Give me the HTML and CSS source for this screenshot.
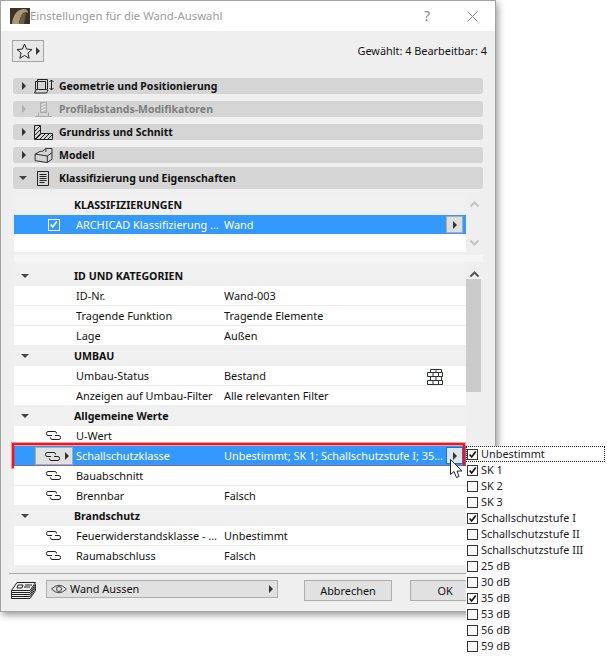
FILE: index.html
```html
<!DOCTYPE html>
<html lang="de">
<head>
<meta charset="utf-8">
<title>Einstellungen für die Wand-Auswahl</title>
<link rel="stylesheet" href="styles.css">
</head>
<body>
<svg class="defs" width="0" height="0" aria-hidden="true">
  <defs>
    <symbol id="link" viewBox="0 0 15 9">
      <path d="M6 4.500H2Q.5 4.500 .5 2.500T2 .5H9Q10.500 .5 10.500 2.500M9 4.500H13Q14.500 4.500 14.500 6.500T13 8.500H6Q4.500 8.500 4.500 6.500" fill="none" stroke="#222" stroke-width="1"/>
    </symbol>
    <symbol id="check" viewBox="0 0 11 11">
      <path d="M2 5.500L4.500 8.500L9.500 1.800" fill="none" stroke="currentColor" stroke-width="2"/>
    </symbol>
  </defs>
</svg>
<div class="dialog">
  <header class="titlebar">
    <svg class="app-icon" viewBox="0 0 20 16"><rect width="20" height="16" fill="#3b3226"/><path d="M2 16C3 6 8 1 14 1C17 1 18 3 18 5C14 2 10 7 9 16Z" fill="#a89878"/><path d="M9 16C10 8 13 5 16 5L14 16Z" fill="#6b5c46"/></svg>
    <span class="title">Einstellungen für die Wand-Auswahl</span>
    <span class="help">?</span>
    <svg class="close" viewBox="0 0 11 11"><path d="M.5 .5L10.500 10.500M10.500 .5L.5 10.500" stroke="#8a8a8a" fill="none"/></svg>
  </header>
  <div class="content">
    <div class="toolbar">
      <button class="star-btn">
        <svg class="star" viewBox="0 0 17 16"><path d="M8.500 1L10.600 6.100L16 6.500L11.900 10L13.200 15.300L8.500 12.500L3.800 15.300L5.100 10L1 6.500L6.400 6.100Z" fill="none" stroke="#222"/></svg>
        <i class="tri-right"></i>
      </button>
      <span class="status">Gewählt: 4 Bearbeitbar: 4</span>
    </div>
    <section class="bars">
      <div class="bar"><i class="tri-right"></i>
        <svg class="bar-icon" viewBox="0 0 20 15"><path d="M3.500 .5H13.500V10.500H3.500ZM1.500 2.500H11.500V10.500M1.500 2.500V10.500H3.500M2 11L.5 14H12.500L14 11" fill="none" stroke="#222"/><path d="M17.500 1V11M15.500 3L17.500 1L19.500 3M15.500 9L17.500 11L19.500 9" fill="none" stroke="#222"/></svg>
        <span>Geometrie und Positionierung</span></div>
      <div class="bar off"><i class="tri-right"></i>
        <svg class="bar-icon" viewBox="0 0 20 15"><rect x="6.500" y=".5" width="6" height="10" fill="#c4c4c4" stroke="#aaa"/><path d="M7 3L12 1M7 6L12 4M7 9L12 7" stroke="#e6e6e6"/><path d="M4.500 10.500V14.500M14.500 10.500V14.500M1 14.500H18" stroke="#aaa" fill="none"/></svg>
        <span>Profilabstands-Modifikatoren</span></div>
      <div class="bar"><i class="tri-right"></i>
        <svg class="bar-icon" viewBox="0 0 20 15"><path d="M.5 .5H6.500V8.500H18.500V14.500H.5Z" fill="none" stroke="#222"/><path d="M1 6L6 1M1 10L6 5M2 14L7 9M6 14L11 9M10 14L15 9M14 14L18 10M1 14L6 9" stroke="#222" fill="none"/></svg>
        <span>Grundriss und Schnitt</span></div>
      <div class="bar"><i class="tri-right"></i>
        <svg class="bar-icon" viewBox="0 0 20 16"><path d="M.5 6.500L6 3.500H8.500L12 .5H18.500V12L13.500 15.500L.5 13.500Z" fill="none" stroke="#222"/><path d="M.5 6.500L13.500 8.500V15.500M13.500 8.500L18.500 5M12 .5V4" fill="none" stroke="#222"/></svg>
        <span>Modell</span></div>
      <div class="bar open"><i class="tri-down"></i>
        <svg class="doc-icon" viewBox="0 0 12 15"><path d="M.5 .5H11.500V14.500H.5Z" fill="none" stroke="#222"/><path d="M2.500 3.500H9.500M2.500 5.500H9.500M2.500 7.500H9.500M2.500 9.500H9.500M2.500 11.500H7.500" stroke="#222"/></svg>
        <span>Klassifizierung und Eigenschaften</span></div>
    </section>

    <section class="pane upper">
      <div class="table">
        <div class="row head"><span></span><span class="head-label">KLASSIFIZIERUNGEN</span></div>
        <div class="row selected tall">
          <span class="lead-check"><span class="box white"><svg viewBox="0 0 11 11"><use href="#check"/></svg></span></span>
          <span class="name">ARCHICAD Klassifizierung ...</span>
          <span class="value">Wand</span>
          <button class="row-btn"><i class="tri-right"></i></button>
        </div>
        <div class="row blank"></div>
      </div>
      <div class="scroll faint">
        <svg viewBox="0 0 9 7"><path d="M.5 5.500L4.500 1.500L8.500 5.500" fill="none" stroke="#c4c4c4" stroke-width="2"/></svg>
        <svg viewBox="0 0 9 7"><path d="M.5 1.500L4.500 5.500L8.500 1.500" fill="none" stroke="#c4c4c4" stroke-width="2"/></svg>
      </div>
    </section>
    <div class="strip"></div>

    <section class="pane lower">
      <div class="table">
        <div class="row head h20"><span class="lead"><i class="tri-down"></i></span><span class="head-label">ID UND KATEGORIEN</span></div>
        <div class="row"><span></span><span class="name">ID-Nr.</span><span class="value">Wand-003</span></div>
        <div class="row"><span></span><span class="name">Tragende Funktion</span><span class="value">Tragende Elemente</span></div>
        <div class="row last"><span></span><span class="name">Lage</span><span class="value">Außen</span></div>
        <div class="row head"><span class="lead"><i class="tri-down"></i></span><span class="head-label">UMBAU</span></div>
        <div class="row"><span></span><span class="name">Umbau-Status</span><span class="value">Bestand</span>
          <svg class="brick" viewBox="0 0 16 16"><path d="M3.500 .5H14.500V3.500H3.500ZM.5 3.500H11.500V7.500H.5ZM11.500 3.500H15.500V7.500H11.500M3.500 7.500H14.500V11.500H3.500ZM.5 11.500H11.500V15.500H.5ZM11.500 11.500H15.500V15.500H11.500M9 .5V3.500M6 3.500V7.500M9 7.500V11.500M6 11.500V15.500" fill="none" stroke="#2a3238"/></svg>
        </div>
        <div class="row last"><span></span><span class="name">Anzeigen auf Umbau-Filter</span><span class="value">Alle relevanten Filter</span></div>
        <div class="row head"><span class="lead"><i class="tri-down"></i></span><span class="head-label">Allgemeine Werte</span></div>
        <div class="row"><span class="lead-link"><svg class="link"><use href="#link"/></svg></span><span class="name">U-Wert</span><span class="value"></span></div>
        <div class="row selected marked">
          <span class="lead-btn"><span class="link-btn"><svg class="link"><use href="#link"/></svg><i class="tri-right"></i></span></span>
          <span class="name">Schallschutzklasse</span>
          <span class="value">Unbestimmt; SK 1; Schallschutzstufe I; 35...</span>
          <button class="row-btn focus"><i class="tri-right"></i></button>
        </div>
        <div class="row"><span class="lead-link"><svg class="link"><use href="#link"/></svg></span><span class="name">Bauabschnitt</span><span class="value"></span></div>
        <div class="row last"><span class="lead-link"><svg class="link"><use href="#link"/></svg></span><span class="name">Brennbar</span><span class="value">Falsch</span></div>
        <div class="row head"><span class="lead"><i class="tri-down"></i></span><span class="head-label">Brandschutz</span></div>
        <div class="row"><span class="lead-link"><svg class="link"><use href="#link"/></svg></span><span class="name">Feuerwiderstandsklasse - ...</span><span class="value">Unbestimmt</span></div>
        <div class="row last"><span class="lead-link"><svg class="link"><use href="#link"/></svg></span><span class="name">Raumabschluss</span><span class="value">Falsch</span></div>
      </div>
      <div class="scroll active">
        <svg viewBox="0 0 9 7"><path d="M.5 5.500L4.500 1.500L8.500 5.500" fill="none" stroke="#555" stroke-width="2"/></svg>
        <div class="thumb"></div>
      </div>
    </section>

    <footer class="footer">
      <svg class="layers" viewBox="0 0 25 18"><path d="M6 .5H24.500L19 8.500H.5Z" fill="none" stroke="#222"/><path d="M.5 8.500V10.500H19L24.500 2.500V4.500L19 12.500H.5V10.500M24.500 4.500V6.500L19 14.500H.5V12.500M24.500 6.500V8.500L19 16.500H.5V14.500" fill="none" stroke="#222"/><path d="M7 3H12L11 6H6ZM14 3H21M13 5H19" fill="none" stroke="#222"/></svg>
      <button class="layer-popup">
        <svg class="eye" viewBox="0 0 16 10"><path d="M.5 5Q8 -2.500 15.500 5Q8 12.500 .5 5Z" fill="none" stroke="#444"/><circle cx="8" cy="5" r="2.500" fill="none" stroke="#444"/></svg>
        <span>Wand Aussen</span>
        <i class="tri-right"></i>
      </button>
      <button class="action">Abbrechen</button>
      <button class="action ok">OK</button>
    </footer>
  </div>
</div>

<ul class="checklist">
  <li class="focused"><span class="box"><svg viewBox="0 0 11 11"><use href="#check"/></svg></span>Unbestimmt</li>
  <li><span class="box"><svg viewBox="0 0 11 11"><use href="#check"/></svg></span>SK 1</li>
  <li><span class="box"></span>SK 2</li>
  <li><span class="box"></span>SK 3</li>
  <li><span class="box"><svg viewBox="0 0 11 11"><use href="#check"/></svg></span>Schallschutzstufe I</li>
  <li><span class="box"></span>Schallschutzstufe II</li>
  <li><span class="box"></span>Schallschutzstufe III</li>
  <li><span class="box"></span>25 dB</li>
  <li><span class="box"></span>30 dB</li>
  <li><span class="box"><svg viewBox="0 0 11 11"><use href="#check"/></svg></span>35 dB</li>
  <li><span class="box"></span>53 dB</li>
  <li><span class="box"></span>56 dB</li>
  <li><span class="box"></span>59 dB</li>
</ul>
<svg class="cursor" viewBox="0 0 13 20"><path d="M.5 .5V15.500L4 12.500L6.500 18.500L9 17.500L7 12H12Z" fill="#fff" stroke="#222"/></svg>
</body>
</html>
```
FILE: styles.css
```css
* { box-sizing: border-box; }
html, body { margin: 0; }
body {
  position: relative;
  width: 607px;
  height: 658px;
  overflow: hidden;
  background: #fff;
  font: 10.9px/16px "Noto Sans", "Open Sans", sans-serif;
  color: #111;
}
.defs { position: absolute; }
i { display: block; font-style: normal; }
button { font: inherit; color: inherit; padding: 0; margin: 0; }

.tri-right { width: 0; height: 0; border-left: 4px solid #333; border-top: 4px solid transparent; border-bottom: 4px solid transparent; }
.tri-down { width: 0; height: 0; border-top: 4px solid #444; border-left: 4px solid transparent; border-right: 4px solid transparent; }

.dialog {
  width: 496px;
  height: 612px;
  border: 1px solid #a3a3a3;
  background: #efefef;
  box-shadow: 2px 3px 7px rgba(0,0,0,.4);
  display: flex;
  flex-direction: column;
}
.titlebar { height: 30px; background: #fff; display: flex; align-items: center; padding: 0 17px 0 9px; flex: none; }
.app-icon { width: 20px; height: 16px; }
.title { color: #9c9c9c; flex: 1; font-size: 11.35px; }
.help { color: #8a8a8a; font-size: 14px; margin-right: 37px; }
.close { width: 11px; height: 11px; }

.content { flex: 1; display: flex; flex-direction: column; min-height: 0; }
.toolbar { height: 47px; flex: none; display: flex; justify-content: space-between; padding: 9px 8px 0 11px; }
.star-btn { width: 32px; height: 22px; border: 1px solid #a3a3a3; background: #e8e8e8; display: flex; align-items: center; padding-left: 3px; gap: 3px; }
.star { width: 17px; height: 16px; }
.status { padding-top: 3px; }

.bars { padding: 0 12px 0 12px; display: flex; flex-direction: column; gap: 7px; flex: none; }
.bar { height: 16px; background: #d5d5d5; border-radius: 3px; display: flex; align-items: center; font-weight: 700; font-size: 10.5px; }
.bar .tri-right { margin-left: 9px; }
.bar .tri-down { margin-left: 6px; }
.bar-icon { width: 20px; height: 15px; margin-left: 8px; margin-right: 5px; flex: none; }
.bar.off { color: #7f7f7f; }
.bar.off .tri-right { border-left-color: #b0b0b0; }
.bar.open { height: 22px; margin-top: -3px; }
.doc-icon { width: 12px; height: 15px; margin-left: 10px; margin-right: 10px; flex: none; }

.pane { display: flex; padding-left: 13px; flex: none; }
.table { width: 452px; flex: none; }
.upper { margin-top: 6px; }
.row { height: 20px; background: #fff; border-bottom: 1px solid #ececec; display: grid; grid-template-columns: 62px 148px 1fr; align-items: center; position: relative; }
.row.last { border-bottom: 0; height: 19px; }
.row.head { background: #f0f0f0; border-bottom: 0; height: 21px; font-weight: 700; font-size: 10.6px; }
.row.head.h20 { height: 24px; padding-top: 4px; }
.upper .row.head { height: 20px; }
.row.blank { height: 18px; border-bottom: 0; }
.row.selected { background: #3399ff; color: #fff; border-bottom: 0; }
.row.tall { height: 19px; }
.head-label { margin-left: -2px; }
.name, .value { white-space: nowrap; overflow: hidden; }
.value { padding-right: 22px; }
.lead { padding-left: 7px; display: block; }
.lead-link { padding-left: 32px; display: flex; }
.link { width: 15px; height: 9px; display: block; }
.lead-check { padding-left: 34px; display: flex; }
.box { width: 11px; height: 11px; border: 1px solid #333; background: #fff; display: block; color: #111; flex: none; }
.box svg { display: block; width: 9px; height: 9px; overflow: visible; }
.box.white { width: 12px; height: 12px; border-color: #fff; background: transparent; color: #fff; }
.lead-btn { display: flex; padding-left: 21px; }
.link-btn { width: 38px; height: 18px; background: #e1e1e1; border: 1px solid #adadad; display: flex; align-items: center; padding-left: 9px; gap: 5px; }
.row-btn { position: absolute; left: 432px; top: 1px; width: 17px; height: 17px; background: #dedede; border: 1px solid #adadad; display: flex; align-items: center; justify-content: center; }
.row-btn.focus { border-color: #0f78d7; background: #dfe6ee; }
.row.marked::after { content: ""; position: absolute; left: -2px; right: 1px; top: -3px; bottom: -2px; border: 2px solid #f5141e; box-shadow: 0 0 0 1px rgba(245,20,30,.4), inset 0 0 0 1px rgba(245,20,30,.35); pointer-events: none; }
.brick { position: absolute; left: 413px; top: 3px; width: 16px; height: 16px; }

.scroll { width: 16px; display: flex; flex-direction: column; align-items: center; }
.scroll svg { width: 9px; height: 7px; flex: none; }
.faint { justify-content: space-between; padding: 6px 0; }
.active { padding-top: 9px; }
.thumb { width: 15px; height: 113px; background: #cbcbcb; margin-top: 1px; align-self: flex-start; }
.strip { height: 7px; margin: 3px 12px 0 13px; background: #f5f5f5; flex: none; }
.lower { margin-top: 0; }

.footer { margin-top: 8px; margin-left: 8px; border-top: 1px solid #a8a8a8; flex: none; display: flex; align-items: flex-start; padding-top: 6px; }
.layers { width: 25px; height: 18px; margin: 2px 10px 0 2px; flex: none; }
.layer-popup { width: 232px; height: 18px; background: #e1e1e1; border: 1px solid #adadad; display: flex; align-items: center; padding: 0 4px; text-align: left; margin-right: 26px; }
.eye { width: 16px; height: 10px; margin-right: 3px; }
.layer-popup span { flex: 1; }
.action { width: 88px; height: 21px; background: #e1e1e1; border: 1px solid #adadad; margin-right: 18px; flex: none; }
.ok { width: 70px; margin-right: 0; }

.checklist { position: absolute; left: 466px; top: 446px; width: 139px; margin: 0; padding: 0; list-style: none; background: #fff; }
.checklist li { height: 16px; display: flex; align-items: center; gap: 3px; padding-left: 1px; white-space: nowrap; color: #1a1a2a; }
.checklist .focused { outline: 1px dotted #222; outline-offset: -1px; }
.cursor { position: absolute; left: 450px; top: 459px; width: 13px; height: 20px; }
```
